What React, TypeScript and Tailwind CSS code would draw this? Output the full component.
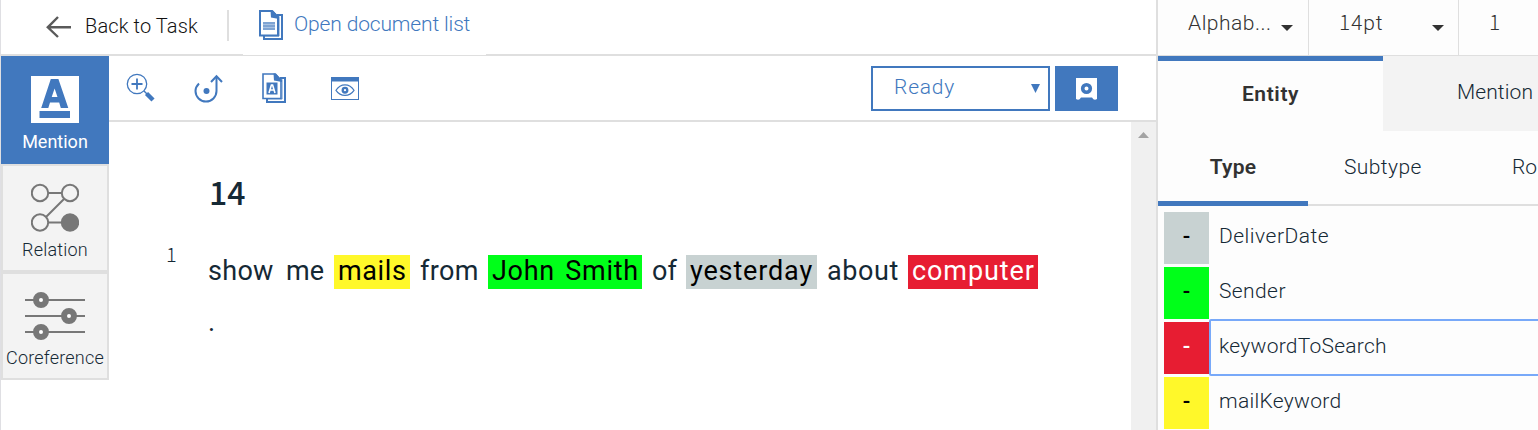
import type { ReactNode } from "react";

const BLUE = "#4178be";

function DocumentsIcon({ letter = false }: { letter?: boolean }) {
  return (
    <svg width="25" height="31" viewBox="0 0 25 31" fill="none" stroke={BLUE}>
      <path d="M18 4.9H23V29H5V26" strokeWidth="2" />
      <path d="M19 6.5H20.2V26H4" strokeWidth="1" opacity=".6" />
      <path d="M1 1H13L19 7V25.5H1Z" fill="#fff" strokeWidth={letter ? 1.6 : 2} />
      <path d="M11.5 .5L14 .5L20 7.5V9L12 7.5Z" fill={BLUE} stroke="none" />
      {letter ? (
        <>
          <rect x="4.5" y="9.5" width="11" height="12" fill={BLUE} stroke="none" />
          <path d="M7 20L9.4 12H10.6L13 20M8 17H12" stroke="#fff" strokeWidth="1.6" />
        </>
      ) : (
        <>
          <path d="M4 12H16V20H4Z" fill={BLUE} stroke="none" opacity=".45" />
          <path d="M4 13H16M4 16H16M4 19H16" strokeWidth="1.2" opacity=".8" />
        </>
      )}
    </svg>
  );
}

function ZoomIcon() {
  return (
    <svg width="30" height="30" viewBox="0 0 30 30" fill="none" stroke={BLUE}>
      <circle cx="11" cy="11" r="9.7" strokeWidth="1.3" />
      <path d="M5.5 11H16.5M11 5.5V16.5" strokeWidth="1.8" />
      <path d="M18 18L21 21" strokeWidth="1.4" />
      <path d="M20.5 20.5L27 27" strokeWidth="4.4" />
    </svg>
  );
}

function HookIcon() {
  return (
    <svg width="30" height="30" viewBox="0 0 30 30" fill="none" stroke={BLUE} strokeWidth="2">
      <path d="M5 9.5C2.5 12 1.5 14 1.5 17A10.5 10.5 0 0 0 22.5 17V2.5" />
      <path d="M17 8L22.5 2.2L28 8" />
      <circle cx="12.5" cy="17" r="3" fill={BLUE} stroke="none" />
    </svg>
  );
}

function PreviewIcon() {
  return (
    <svg width="28" height="23" viewBox="0 0 28 23" fill="none" stroke={BLUE}>
      <rect x=".5" y=".5" width="27" height="22" />
      <path d="M0 0H28V4.5H0Z" fill={BLUE} stroke="none" />
      <path d="M5 13.3C9.5 6 18.5 6 23 13.3C18.5 20 9.5 20 5 13.3Z" strokeWidth="1.2" />
      <circle cx="14" cy="13.2" r="2.3" strokeWidth="2.3" />
    </svg>
  );
}

function MentionIcon() {
  return (
    <svg width="48" height="47" viewBox="0 0 48 47">
      <path d="M0 0H48V47H0Z" fill="#fff" />
      <path
        d="M19.8 3H27.4L37.3 32H29.8L28.2 26.5H19L17.3 32H10.2ZM23.6 12.5L20.7 21H26.5Z"
        fill={BLUE}
        fillRule="evenodd"
      />
      <path d="M8.5 35H39V42H8.5Z" fill={BLUE} />
    </svg>
  );
}

function RelationIcon() {
  return (
    <svg width="48" height="50" viewBox="0 0 48 50" fill="none" stroke="#777" strokeWidth="2">
      <path d="M18 10H30M33 16L15 34M18 39.5H30" />
      <circle cx="9" cy="10" r="8.2" />
      <circle cx="39" cy="10" r="8.2" />
      <circle cx="9" cy="39.5" r="8.2" />
      <circle cx="39" cy="39.5" r="9.2" fill="#777" stroke="none" />
    </svg>
  );
}

function CoreferenceIcon() {
  return (
    <svg width="60" height="48" viewBox="0 0 60 48" stroke="#777" strokeWidth="1.9">
      <path d="M0 8H60M0 24H60M0 40H60" />
      <g fill="#fff" strokeWidth="6">
        <circle cx="16" cy="8" r="5" />
        <circle cx="44" cy="24" r="5" />
        <circle cx="16" cy="40" r="5" />
      </g>
    </svg>
  );
}

function Caret() {
  return (
    <svg width="12" height="6" viewBox="0 0 12 6">
      <path d="M0 0H12L6 6Z" fill="#323232" />
    </svg>
  );
}

function Digits({ children }: { children: ReactNode }) {
  return <span className="font-['Noto_Sans_CJK_SC',sans-serif]">{children}</span>;
}

function Sidebar() {
  return (
    <nav className="flex w-[108px] shrink-0 flex-col text-center text-[18px] leading-[22px] font-light text-[#152935]">
      <div className="flex h-[108px] flex-col items-center bg-[#4178be] pt-[20px] font-normal text-white">
        <MentionIcon />
        <span className="mt-[8px]">Mention</span>
      </div>
      <div className="flex h-[108px] flex-col items-center border-2 border-[#dfdfdf] bg-[#f3f3f3] pt-[17px]">
        <RelationIcon />
        <span className="mt-[6px] tracking-[0.2px]">Relation</span>
      </div>
      <div className="flex h-[108px] flex-col items-center border-2 border-[#dfdfdf] bg-[#f3f3f3] pt-[18px]">
        <CoreferenceIcon />
        <span className="mt-[7px] tracking-[0.2px]">Coreference</span>
      </div>
    </nav>
  );
}

function Toolbar() {
  return (
    <div className="flex h-[66px] border-b-2 border-[#dfdfdf]">
      <div className="flex w-[762px] items-start pt-[17px] pl-[17px]">
        <div className="w-[68px]"><ZoomIcon /></div>
        <div className="w-[68px] pt-px"><HookIcon /></div>
        <div className="w-[69px]"><DocumentsIcon letter /></div>
        <div className="pt-[4px]"><PreviewIcon /></div>
      </div>
      <div className="mt-[10px] flex h-[45px] w-[179px] justify-between border-2 border-[#4178be] pr-[8px] pl-[21px] text-[21px] leading-[38px] font-light tracking-[0.8px] text-[#4178be]">
        <span>Ready</span>
        <svg className="mt-[16px]" width="9" height="9" viewBox="0 0 9 9">
          <path d="M0 0H9L4.5 9Z" fill={BLUE} />
        </svg>
      </div>
      <div className="mt-[10px] ml-[5px] flex h-[45px] w-[63px] items-center justify-center bg-[#4178be]">
        <svg width="21" height="22" viewBox="0 0 21 22">
          <path d="M0 0H21V21Q18 23 16 19.5H5Q3 23 0 21Z" fill="#fff" />
          <circle cx="10.5" cy="10.5" r="3.8" fill="#fff" stroke={BLUE} strokeWidth="3.6" />
        </svg>
      </div>
    </div>
  );
}

const words = [
  { text: "show", style: "w-[78px] tracking-[0.3px]" },
  { text: "me", style: "w-[48px]" },
  { text: "mails", style: "mr-[10px] w-[76px] bg-[#fff82a] pl-[4px] text-black tracking-[0.6px]" },
  { text: "from", style: "w-[68px] tracking-[0.4px]" },
  { text: "John Smith", style: "mr-[10px] w-[154px] bg-[#00ff19] pl-[4px] text-black tracking-[0.7px] [word-spacing:3px]" },
  { text: "of", style: "w-[34px]" },
  { text: "yesterday", style: "mr-[10px] w-[131px] bg-[#c8d2d2] pl-[4px] text-black tracking-[0.85px]" },
  { text: "about", style: "w-[81px] tracking-[0.6px]" },
  { text: "computer", style: "w-[130px] bg-[#e71d32] pl-[4px] text-white tracking-[0.9px]" },
];

function Document() {
  return (
    <div className="flex flex-1">
      <article className="w-[1022px] text-[#152935]">
        <h1 className="pt-[46px] pl-[100px] text-[32px] leading-[46px] font-medium"><Digits>14</Digits></h1>
        <div className="flex pt-[36px]">
          <div className="w-[99px] pl-[57px] text-[20px] leading-none font-light"><Digits>
            <span className="block h-0 leading-[1px]">1</span>
          </Digits></div>
          <div className="pt-[2px] text-[27px] leading-[32px] whitespace-nowrap">
            <p className="flex">
              {words.map((w) => (
                <span key={w.text} className={`h-[34px] ${w.style}`}>{w.text}</span>
              ))}
            </p>
            <p className="pt-[17px]">.</p>
          </div>
        </div>
      </article>
      <div className="flex w-[25px] justify-center bg-[#f0f0f0] pt-[10px]">
        <svg width="11" height="6" viewBox="0 0 11 6"><path d="M0 6L5.5 0L11 6Z" fill="#a3a3a3" /></svg>
      </div>
    </div>
  );
}

function TopBar() {
  return (
    <header className="flex h-[56px] shrink-0 border-b-2 border-[#dfdfdf] leading-[24px]">
      <div className="flex h-[54px] w-[242px] pl-[45px]">
        <svg className="mt-[16px]" width="25" height="22" viewBox="0 0 25 22" fill="none" stroke="#5a5a5a" strokeWidth="2.4">
          <path d="M25 11.3H2M12 1L1.8 11.3L12 21" />
        </svg>
        <span className="mt-[14px] ml-[14px] w-[142px] text-[20px] font-light tracking-[0.12px] text-[#111]">Back to Task</span>
        <div className="mt-[10px] h-[31px] w-[2px] bg-[#dfdfdf]" />
      </div>
      <div className="flex h-[55px] w-[243px] bg-white pl-[16px]">
        <div className="mt-[10px]"><DocumentsIcon /></div>
        <span className="mt-[12px] ml-[10px] text-[21px] font-light tracking-[-0.15px] text-[#4178be]">Open document list</span>
      </div>
    </header>
  );
}

const types = [
  { name: "DeliverDate", swatch: "bg-[#c8d2d2] text-black", row: "border-transparent", text: "tracking-[0.5px]" },
  { name: "Sender", swatch: "bg-[#00ff19] text-black", row: "border-transparent", text: "tracking-[0.4px]" },
  { name: "keywordToSearch", swatch: "bg-[#e71d32] text-white", row: "border-[#78a9f9]", text: "tracking-[0.25px]" },
  { name: "mailKeyword", swatch: "bg-[#fff82a] text-black", row: "border-transparent", text: "tracking-[0.3px]" },
];

function TypePanel() {
  return (
    <aside className="flex w-[382px] shrink-0 flex-col overflow-hidden border-l-2 border-[#dfdfdf] bg-[#fdfdfd] text-[21px] leading-[24px] font-light whitespace-nowrap text-[#152935]">
      <div className="flex h-[56px] shrink-0 border-b border-[#dfdfdf] text-[#323232]">
        <div className="flex w-[151px] justify-between border-r border-[#dfdfdf] pt-[11px] pr-[15px] pl-[30px]">
          <span className="tracking-[0.5px]">Alphab...</span>
          <div className="pt-[14px] leading-none"><Caret /></div>
        </div>
        <div className="flex w-[150px] justify-between border-r border-[#dfdfdf] pt-[10px] pr-[14px] pl-[30px]">
          <span className="leading-[22px] tracking-[0.9px]"><Digits>14</Digits>pt</span>
          <div className="pt-[15px] leading-none"><Caret /></div>
        </div>
        <span className="pt-[10px] pl-[30px] leading-[22px]"><Digits>1</Digits></span>
      </div>
      <div className="flex h-[75px] shrink-0">
        <div className="w-[225px] border-t-[5px] border-[#4178be] pt-[21px] text-center font-semibold tracking-[0.6px] text-[#323232]">Entity</div>
        <div className="w-[155px] bg-[#f3f3f3] pt-[24px] pl-[74px] tracking-[0.1px]">Mention</div>
      </div>
      <div className="flex h-[75px] shrink-0">
        <div className="h-[75px] w-[150px] border-b-[5px] border-[#4178be] pt-[24px] text-center font-semibold tracking-[0.2px] text-[#323232]">Type</div>
        <div className="flex flex-1 border-b-2 border-[#dfdfdf] pt-[24px] pl-[36px]">
          <span className="w-[168px] tracking-[0.4px]">Subtype</span>
          <span>Ro</span>
        </div>
      </div>
      <div className="flex flex-col pt-[3px]">
        {types.map((t) => (
          <div key={t.name} className="flex h-[55px] shrink-0 pl-[6px]">
            <div className={`mt-[3px] flex h-[52px] w-[45px] shrink-0 items-center justify-center pb-[2px] text-[22px] font-medium ${t.swatch}`}>-</div>
            <div className={`h-[57px] w-[340px] shrink-0 rounded-[2px] border-2 pt-[13px] pl-[8px] ${t.row}`}>
              <span className={t.text}>{t.name}</span>
            </div>
          </div>
        ))}
      </div>
    </aside>
  );
}

export default function App() {
  return (
    <div className="flex h-[430px] w-[1538px] overflow-hidden bg-white font-['Roboto',sans-serif]">
      <main className="flex w-[1156px] shrink-0 flex-col border-l border-[#dfdfe3]">
        <TopBar />
        <div className="flex flex-1">
          <Sidebar />
          <section className="flex flex-1 flex-col">
            <Toolbar />
            <Document />
          </section>
        </div>
      </main>
      <TypePanel />
    </div>
  );
}
